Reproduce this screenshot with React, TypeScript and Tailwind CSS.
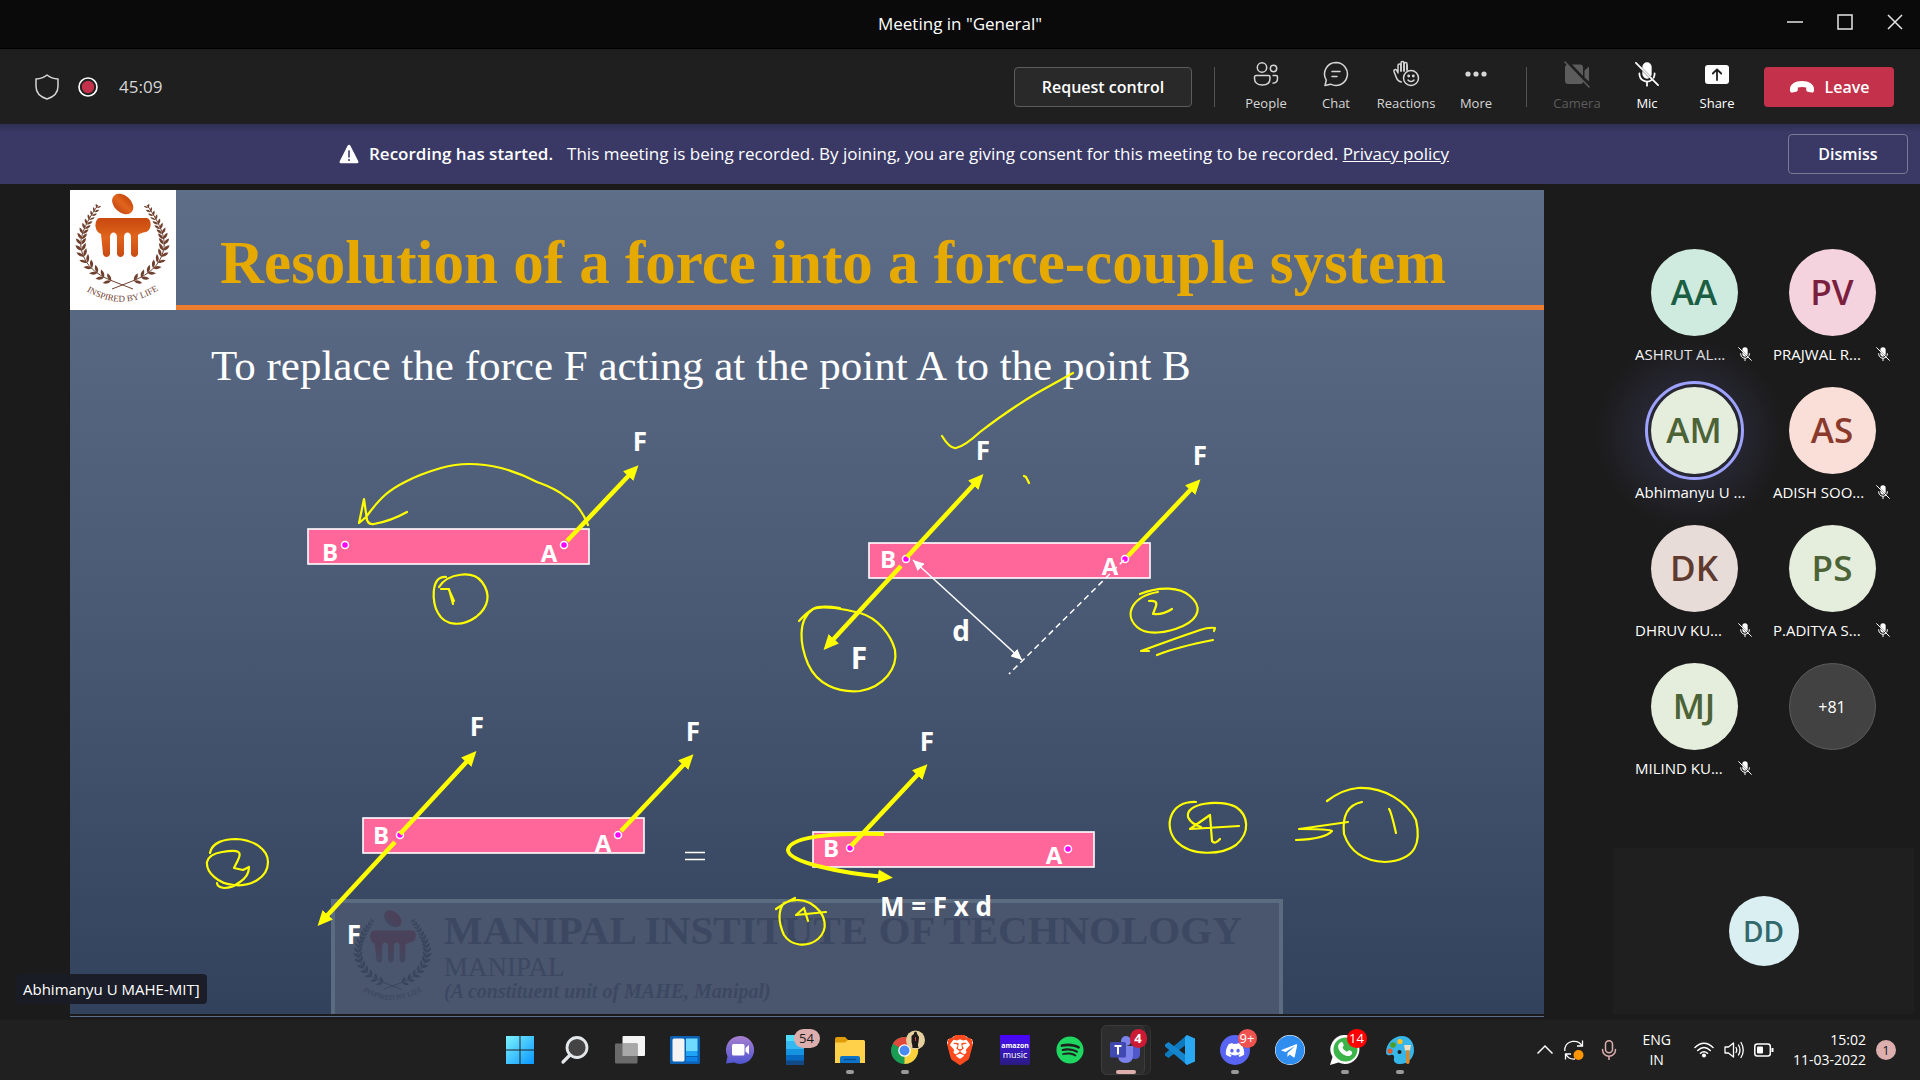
import React from "react";
import { FaSpotify, FaTelegram, FaDiscord } from "react-icons/fa";
import { SiBrave } from "react-icons/si";

/* ---------- Small shared icons ---------- */

function MicOffIcon({ className }: { className: string }) {
  return (
    <svg viewBox="0 0 24 24" className={className} fill="none" stroke="currentColor" strokeWidth="1.5" strokeLinecap="round">
      <path d="M12 2a4 4 0 0 1 4 4v6a4 4 0 0 1-.6 2.1L8 6.700V6a4 4 0 0 1 4-4zM8 9.500l6 6A4 4 0 0 1 8 12z" fill="currentColor" stroke="none" />
      <path d="M5.500 11.500v.5a6.500 6.500 0 0 0 10.600 5M18.500 11.500v.5c0 1.200-.3 2.200-.8 3.200M12 18.500V22M2.500 2.500l19 19" />
    </svg>
  );
}

function PeopleIcon() {
  return (
    <svg viewBox="0 0 26 26" className="size-[26px]" fill="none" stroke="currentColor" strokeWidth="1.5">
      <circle cx="9" cy="6.500" r="4.700" />
      <circle cx="20.500" cy="7.500" r="3.200" />
      <path d="M3 14.500h12.500a1.500 1.500 0 0 1 1.500 1.500v1.500c0 4-3 6.500-7.700 6.500S1.500 21.500 1.500 17.500V16A1.500 1.500 0 0 1 3 14.500z" />
      <path d="M19.500 14.500h3.500a1.500 1.500 0 0 1 1.500 1.500v1.500c0 3-2 4.700-5 4.700" />
    </svg>
  );
}

function ChatIcon() {
  return (
    <svg viewBox="0 0 26 26" className="size-[26px]" fill="none" stroke="currentColor" strokeWidth="1.500" strokeLinecap="round" strokeLinejoin="round">
      <path d="M13 1.500a11.500 11.500 0 1 1-5.400 21.700L2 24.500l1.300-5.400A11.500 11.500 0 0 1 13 1.500z" />
      <path d="M9 10.500h8M9 15.500h5" />
    </svg>
  );
}

function ReactionsIcon() {
  return (
    <svg viewBox="0 0 28 28" className="size-[28px]" fill="none" stroke="currentColor" strokeWidth="1.500" strokeLinecap="round" strokeLinejoin="round">
      <path d="M6 13V5.500a1.500 1.500 0 0 1 3 0V11V3a1.500 1.500 0 0 1 3 0v8V4a1.500 1.500 0 0 1 3 0v6M6 12.500L4.500 10a1.500 1.500 0 0 0-2.500 1.500l2.500 6.500c1 2.500 2.500 3.700 4.800 4" />
      <path d="M9 4v7M12 3v8M15 5v5" />
      <circle cx="19" cy="18" r="7.500" />
      <path d="M16 20c1.500 2 4.500 2 6 0" />
      <circle cx="16.700" cy="16" r=".7" fill="currentColor" />
      <circle cx="21.300" cy="16" r=".7" fill="currentColor" />
    </svg>
  );
}

function MoreIcon() {
  return (
    <svg viewBox="0 0 26 26" className="size-[26px]" fill="currentColor">
      <circle cx="5" cy="13" r="2.600" />
      <circle cx="13" cy="13" r="2.600" />
      <circle cx="21" cy="13" r="2.600" />
    </svg>
  );
}

function CameraOffIcon() {
  return (
    <svg viewBox="0 0 28 28" className="size-[28px]" fill="currentColor">
      <path d="M5 4.500L20 21v.5a2.500 2.500 0 0 1-2.500 2.500H5a3 3 0 0 1-3-3V8a3 3 0 0 1 3-3.500zM9 4.500h8A3 3 0 0 1 20 7.500V16zM21.500 10.500L26 6.500v15l-4.500-4z" />
      <path d="M2 2l24 25" stroke="currentColor" strokeWidth="1.500" strokeLinecap="round" />
    </svg>
  );
}

function ShareIcon() {
  return (
    <svg viewBox="0 0 26 26" className="size-[26px]">
      <rect x="1" y="4" width="24" height="19" rx="3" fill="currentColor" />
      <path d="M13 19V8.500M8.800 12.500L13 8.300l4.200 4.200" fill="none" stroke="#1f1f1f" strokeWidth="1.800" strokeLinecap="round" strokeLinejoin="round" />
    </svg>
  );
}

function HangUpIcon() {
  return (
    <svg viewBox="0 0 26 14" className="h-[14px] w-[26px]" fill="currentColor">
      <path d="M13 1C20 1 25 4.500 25 9v1.500c0 1.500-1 2.300-2.400 2l-3.800-.8c-1-.2-1.600-1-1.600-2V7.600c-2.700-.9-5.700-.9-8.400 0v2.100c0 1-.6 1.800-1.600 2l-3.800.8c-1.400.3-2.400-.5-2.400-2V9C1 4.500 6 1 13 1z" />
    </svg>
  );
}

/* ---------- Title bar, toolbar, banner ---------- */

function TitleBar() {
  return (
    <header className="relative flex h-[49px] items-center justify-center border-b border-black bg-[#0a0a0a] text-white">
      <h1 className="text-[17px] leading-6">Meeting in "General"</h1>
      <div className="absolute inset-y-0 right-0 flex">
        <button aria-label="Minimize" className="flex w-[50px] items-center justify-center pb-1">
          <svg viewBox="0 0 16 16" className="size-4" stroke="#e6e6e6" strokeWidth="1.500"><path d="M0 8h16" /></svg>
        </button>
        <button aria-label="Maximize" className="flex w-[50px] items-center justify-center pb-1">
          <svg viewBox="0 0 16 16" className="size-4" stroke="#e6e6e6" strokeWidth="1.500" fill="none"><path d="M1 1h14v14H1z" /></svg>
        </button>
        <button aria-label="Close" className="flex w-[50px] items-center justify-center pb-1">
          <svg viewBox="0 0 16 16" className="size-4" stroke="#e6e6e6" strokeWidth="1.500"><path d="M1 1l14 14M15 1L1 15" /></svg>
        </button>
      </div>
    </header>
  );
}

function ToolButton({ label, tone, children }: { label: string; tone: string; children: React.ReactNode }) {
  return (
    <button className={"flex w-[70px] flex-col items-center gap-[5px] " + tone}>
      <span className="flex h-7 items-center">{children}</span>
      <span className="text-[13px] leading-5">{label}</span>
    </button>
  );
}

function Toolbar() {
  return (
    <div className="flex h-[75px] items-center bg-[#1f1f1f] pr-[26px] pl-[34px] text-[#d6d6d6]">
      <svg viewBox="0 0 26 26" className="size-[26px]" fill="none" stroke="currentColor" strokeWidth="1.500" strokeLinejoin="round">
        <path d="M13 1c3.200 2.500 6.800 3.700 11 4v7.500c0 6-4 10.300-11 12.500C6 22.800 2 18.500 2 12.500V5c4.200-.3 7.800-1.500 11-4z" />
      </svg>
      <svg viewBox="0 0 20 20" className="ml-[18px] size-5" role="img" aria-label="Recording">
        <circle cx="10" cy="10" r="9" fill="none" stroke="#fff" strokeWidth="1.600" />
        <circle cx="10" cy="10" r="6.200" fill="#c4314b" />
      </svg>
      <time className="ml-[21px] text-[17px] leading-6">45:09</time>
      <div className="ml-auto flex items-center">
        <button className="h-10 w-[178px] rounded-[4px] border border-[#5c5c5c] bg-[#292929] text-[16px] font-semibold text-white">Request control</button>
        <span className="mr-4 ml-[22px] h-10 w-px bg-[#525252]" />
        <ToolButton label="People" tone="text-[#d6d6d6]"><PeopleIcon /></ToolButton>
        <ToolButton label="Chat" tone="text-[#d6d6d6]"><ChatIcon /></ToolButton>
        <ToolButton label="Reactions" tone="text-[#d6d6d6]"><ReactionsIcon /></ToolButton>
        <ToolButton label="More" tone="text-[#d6d6d6]"><MoreIcon /></ToolButton>
        <span className="mx-[15px] h-10 w-px bg-[#525252]" />
        <ToolButton label="Camera" tone="text-[#5c5c5c]"><CameraOffIcon /></ToolButton>
        <ToolButton label="Mic" tone="text-white"><MicOffIcon className="size-7" /></ToolButton>
        <ToolButton label="Share" tone="text-white"><ShareIcon /></ToolButton>
        <button className="ml-3 flex h-10 w-[130px] items-center justify-center gap-[10px] rounded-[4px] bg-[#c4314b] text-[16px] font-semibold text-white">
          <HangUpIcon />
          Leave
        </button>
      </div>
    </div>
  );
}

function Banner() {
  return (
    <div className="relative flex h-[60px] items-center bg-[#3a3966] pr-3 text-white">
      <div className="absolute inset-x-0 top-0 h-2 bg-gradient-to-b from-black/20 to-transparent" />
      <div className="flex flex-1 items-center justify-center text-[17px] leading-6">
        <svg viewBox="0 0 20 20" className="mr-[10px] size-5">
          <path d="M10 .8c.6 0 1 .3 1.300.8l8 15.600c.5 1-.1 2-1.200 2H1.900c-1.100 0-1.700-1-1.200-2l8-15.600c.3-.5.700-.8 1.300-.8z" fill="#fff" />
          <path d="M10 7v6" stroke="#3a3966" strokeWidth="1.600" strokeLinecap="round" />
          <circle cx="10" cy="16" r="1" fill="#3a3966" />
        </svg>
        <strong className="mr-[14px] font-semibold">Recording has started.</strong>
        <p>
          This meeting is being recorded. By joining, you are giving consent for this meeting to be recorded.{" "}
          <a href="#privacy" className="underline">Privacy policy</a>
        </p>
      </div>
      <button className="h-10 w-[120px] rounded-[4px] border border-[#7a7998] text-[16px] font-semibold">Dismiss</button>
    </div>
  );
}

/* ---------- Shared slide ---------- */

// Leaf pairs along the laurel stem: x, y, stem direction in degrees, scale
const leaves: [number, number, number, number][] = [
  [27, 18, -60, 0.55], [24.500, 22, -60, 0.6], [22, 26, -61, 0.65], [19.500, 30, -63, 0.7], [17, 34.500, -66, 0.75],
  [15, 39, -70, 0.8], [13, 44, -76, 0.85], [11.800, 49, -83, 0.9], [11.300, 54.500, -90, 0.95], [12, 60.500, -99, 1],
  [14, 66.500, -110, 1], [17.500, 72.500, -122, 1], [22, 78, -132, 1], [27.500, 83, -140, 1], [34, 87.500, -146, 1], [41, 91, -152, 1],
];

function Branch() {
  return (
    <g>
      <path d="M28 15C14 35 8 50 12 62c4 14 14 22 28 28l23 9" fill="none" stroke="currentColor" strokeWidth="1" />
      {leaves.map(([x, y, angle, scale], i) => (
        <g key={i} transform={`translate(${x} ${y}) rotate(${angle}) scale(${scale})`}>
          <path d="M0 0q4-3.200 8.500 0q-4.500 3-8.500 0z" transform="rotate(-42)" fill="currentColor" />
          <path d="M0 0q4-3.200 8.500 0q-4.500 3-8.500 0z" transform="rotate(36)" fill="currentColor" />
        </g>
      ))}
    </g>
  );
}

function Emblem({ muted }: { muted: boolean }) {
  const id = muted ? "motto-muted" : "motto";
  return (
    <svg viewBox="0 0 106 120" className={muted ? "h-[100px] w-[88px] text-[#37445c]" : "h-[120px] w-[106px] bg-white text-[#70402f]"}>
      <defs>
        <linearGradient id={id + "-g"} x1="0" y1="0" x2="0" y2="1">
          <stop offset="0" stopColor={muted ? "#4a425a" : "#c8480f"} />
          <stop offset=".5" stopColor={muted ? "#4a425a" : "#e0641c"} />
          <stop offset="1" stopColor={muted ? "#414862" : "#c84a14"} />
        </linearGradient>
        <path id={id} d="M13 99Q52 125 92 98" />
      </defs>
      <ellipse cx="52.700" cy="14" rx="12" ry="8.500" transform="rotate(42 52.700 14)" fill={`url(#${id}-g)`} />
      <path d="M29 28h48c5 1 5 12-1 14q-6 1-8 3v19c-1 4-6 4-7 0V47c0-6-7-6-7 0v17c-1 4-6 4-7 0V47c0-6-7-6-7 0v17c-1 4-6 4-7 0L31 44c-7-2-7-14-2-16z" fill={`url(#${id}-g)`} />
      <Branch />
      <g transform="translate(105 0) scale(-1 1)"><Branch /></g>
      <text fill="currentColor" fontSize="9" fontFamily="Liberation Serif, serif">
        <textPath href={"#" + id} startOffset="50%" textAnchor="middle">INSPIRED BY LIFE</textPath>
      </text>
    </svg>
  );
}

function Beam({ x, y }: { x: number; y: number }) {
  return <rect x={x} y={y} width="281" height="35" fill="#ff6699" stroke="#fff" strokeWidth="1.600" />;
}

function Pin({ x, y }: { x: number; y: number }) {
  return <circle cx={x} cy={y} r="3.500" fill="#ff00ff" stroke="#fff" strokeWidth="1.500" />;
}

function Force({ x1, y1, x2, y2 }: { x1: number; y1: number; x2: number; y2: number }) {
  return <path d={`M${x1} ${y1}L${x2} ${y2}`} stroke="#ffff00" strokeWidth="4.500" fill="none" markerEnd="url(#head)" />;
}

function Label({ x, y, size = 26, children }: { x: number; y: number; size?: number; children: string }) {
  return (
    <text x={x} y={y} fontSize={size} textAnchor="middle" fontWeight="700" fill="#fff" fontFamily="Open Sans, sans-serif">
      {children}
    </text>
  );
}

function Diagram() {
  return (
    <svg viewBox="70 190 1474 824" className="absolute inset-0 h-full w-full">
      <defs>
        <marker id="head" markerUnits="userSpaceOnUse" markerWidth="16" markerHeight="14" refX="7" refY="7" orient="auto">
          <path d="M0 0l15 7-15 7z" fill="#ffff00" />
        </marker>
        <marker id="tip" markerUnits="userSpaceOnUse" markerWidth="12" markerHeight="10" refX="11" refY="5" orient="auto-start-reverse">
          <path d="M0 0l11 5-11 5z" fill="#fff" />
        </marker>
      </defs>

      <Beam x={308} y={529} />
      <Pin x={345} y={545} />
      <Pin x={564} y={545} />
      <Force x1={567} y1={541} x2={633} y2={471} />
      <Label x={330} y={561} size={24}>B</Label>
      <Label x={549} y={562} size={24}>A</Label>
      <Label x={640} y={451}>F</Label>

      <Beam x={869} y={543} />
      <Pin x={906} y={559} />
      <Pin x={1125} y={559} />
      <Force x1={907} y1={557} x2={978} y2={480} />
      <Force x1={901} y1={566} x2={829} y2={644} />
      <Force x1={1128} y1={556} x2={1195} y2={485} />
      <path d="M913 560L1022 660" stroke="#fff" strokeWidth="1.500" markerStart="url(#tip)" markerEnd="url(#tip)" />
      <path d="M1124 560L1009 674" stroke="#fff" strokeWidth="1.500" strokeDasharray="6 4" />
      <Label x={888} y={568} size={24}>B</Label>
      <Label x={1110} y={575} size={24}>A</Label>
      <Label x={983} y={460}>F</Label>
      <Label x={1200} y={465}>F</Label>
      <Label x={859} y={669} size={30}>F</Label>
      <Label x={961} y={641} size={28}>d</Label>

      <Beam x={363} y={818} />
      <Pin x={400} y={835} />
      <Pin x={618} y={835} />
      <Force x1={400} y1={834} x2={471} y2={757} />
      <Force x1={395} y1={842} x2={323} y2={920} />
      <Force x1={621} y1={831} x2={688} y2={760} />
      <path d="M685 852.500h20M685 859.500h20" stroke="#fff" strokeWidth="1.500" />
      <Label x={381} y={844} size={24}>B</Label>
      <Label x={603} y={852} size={24}>A</Label>
      <Label x={477} y={736}>F</Label>
      <Label x={693} y={741}>F</Label>
      <Label x={354} y={944}>F</Label>

      <Beam x={813} y={832} />
      <Pin x={850} y={848} />
      <Pin x={1068} y={849} />
      <Force x1={851} y1={846} x2={922} y2={770} />
      <path d="M884 834C850 833 790 834 788 850C788 862 840 873 885 877" stroke="#ffff00" strokeWidth="4" fill="none" markerEnd="url(#head)" />
      <Label x={831} y={857} size={24}>B</Label>
      <Label x={1054} y={864} size={24}>A</Label>
      <Label x={927} y={751}>F</Label>
      <Label x={936} y={916}>M = F x d</Label>

      <g fill="none" stroke="#ffff00" strokeWidth="2.200" strokeLinecap="round" strokeLinejoin="round">
        <path d="M588 525C582 510 575 502 566 497C555 488 545 485 537 482Q520 473 501 468Q485 464 469 464Q455 464 441 468Q420 474 405 482Q393 488 385 495C376 503 370 512 366 517L359 523L364 499L367 520Q369 525 374 524Q391 521 407 512" />
        <path d="M446 577C430 576 432 604 438 613C445 626 462 627 476 617C489 607 491 594 482 582C473 570 448 573 439 587M441 589h8l4 15M449 590l5 11" />
        <path d="M942 436Q950 449 956 448Q965 446 980 432Q1010 409 1037 393L1073 373M1024 476l2 1 3 6" />
        <path d="M799 621Q806 613 813 609Q820 605 840 608M860 613C878 618 891 635 895 650C898 668 884 687 860 691C837 693 817 684 808 664C800 645 797 620 813 609C822 605 845 609 860 613" />
        <path d="M1140 594C1160 586 1180 587 1190 596C1202 606 1200 618 1183 626C1167 633 1147 636 1137 627C1123 614 1133 596 1158 592M1149 601Q1158 600 1156 606L1153 614Q1163 615 1172 609" />
        <path d="M1149 651h-8Q1185 635 1200 630Q1209 627 1215 628l-1 3M1157 655Q1177 647 1213 640" />
        <path d="M210 853C212 842 225 839 236 839C255 840 268 850 268 862C268 878 250 887 234 885C218 884 206 872 207 862Q209 854 222 852C240 849 242 852 238 860L234 868l9 2 6-3Q249 876 240 882Q232 888 224 888Q217 887 217 883" />
        <path d="M776 909Q784 903 795 898M784 903Q798 897 810 903C828 914 828 930 818 939C807 948 791 946 784 935C778 922 778 910 784 903M804 908l-8 7 30-3M804 908l4 13" />
        <path d="M1196 802C1170 801 1163 826 1176 841C1191 857 1222 855 1236 845C1251 832 1248 815 1236 807C1220 799 1185 803 1188 817Q1191 824 1201 827M1210 815L1190 829L1239 826M1210 815l2 26q3 4 8-2" />
        <path d="M1348 822L1299 829Q1330 829 1332 831Q1325 839 1296 840" />
        <path d="M1327 801Q1343 789 1358 788C1385 787 1407 802 1416 820C1421 842 1417 860 1385 862C1364 861 1350 852 1344 834Q1341 806 1362 802M1389 809q2 2 7 24" />
      </g>
    </svg>
  );
}

function Slide() {
  return (
    <section aria-label="Shared slide" className="relative flex min-h-[824px] flex-col bg-gradient-to-b from-[#5e6e88] via-[#4b5a74] to-[#33425c]">
      <div className="flex">
        <Emblem muted={false} />
        <h2 className="flex-1 border-b-[5px] border-[#ed7d31] pt-[38px] pl-11 font-['Liberation_Serif',serif] text-[61px] leading-[70px] font-bold whitespace-nowrap text-[#e5a900]">
          Resolution of a force into a force-couple system
        </h2>
      </div>
      <p className="mt-8 pl-[141px] font-['Liberation_Serif',serif] text-[43px] leading-[48px] whitespace-nowrap text-white">
        To replace the force F acting at the point A to the point B
      </p>
      <div className="mt-auto ml-[261px] flex h-[115px] w-[952px] border-x-4 border-t-4 border-[#5b6b80] bg-[#4a566d] pt-1 pl-[14px] font-['Liberation_Serif',serif] text-[#3c4862]">
        <Emblem muted />
        <div className="pl-[7px]">
          <p className="text-[41px] leading-[46px] font-bold whitespace-nowrap">MANIPAL INSTITUTE OF TECHNOLOGY</p>
          <p className="text-[27px] leading-7">MANIPAL</p>
          <p className="text-[20px] leading-5 font-bold italic">(A constituent unit of MAHE, Manipal)</p>
        </div>
      </div>
      <Diagram />
    </section>
  );
}

/* ---------- Participants ---------- */

type Person = { initials: string; name: string; color: string; speaking?: boolean };

const people: Person[] = [
  { initials: "AA", name: "ASHRUT AL...", color: "bg-[#cfeadf] text-[#1b5e43]" },
  { initials: "PV", name: "PRAJWAL R...", color: "bg-[#f4d3de] text-[#7a1f3d]" },
  { initials: "AM", name: "Abhimanyu U ...", color: "bg-[#e5eddc] text-[#4b6336]", speaking: true },
  { initials: "AS", name: "ADISH SOO...", color: "bg-[#fadfd8] text-[#8a3a2c]" },
  { initials: "DK", name: "DHRUV KU...", color: "bg-[#e7dcd8] text-[#5f3a2e]" },
  { initials: "PS", name: "P.ADITYA S...", color: "bg-[#e5eddc] text-[#4b6336]" },
  { initials: "MJ", name: "MILIND KU...", color: "bg-[#e5eddc] text-[#4b6336]" },
];

function Participant({ person }: { person: Person }) {
  return (
    <li className="relative flex w-[118px] flex-col items-center">
      {person.speaking && <span className="absolute -top-12 -left-10 size-[190px] rounded-full bg-[radial-gradient(closest-side,#32324a,transparent)]" />}
      <span className={"relative flex size-[87px] items-center justify-center rounded-full text-[35px] font-semibold " + person.color}>
        {person.initials}
        {person.speaking && <span className="absolute -inset-[6px] rounded-full border-[3px] border-[#9ea2ff]" />}
      </span>
      <span className="relative mt-2 flex w-full items-center justify-between text-[15px] leading-5 whitespace-nowrap text-white">
        {person.name}
        {!person.speaking && <MicOffIcon className="size-4" />}
      </span>
    </li>
  );
}

function Sidebar() {
  return (
    <aside className="flex w-[376px] shrink-0 flex-col pr-[6px] pl-[69px]">
      <ul className="mt-[59px] grid grid-cols-[118px_118px] gap-x-5 gap-y-[23px] pl-[22px]">
        {people.map((person) => (
          <Participant key={person.initials} person={person} />
        ))}
        <li className="flex w-[118px] justify-center">
          <button className="size-[87px] rounded-full border border-[#5c5c5c] bg-[#424242] text-[16px] text-white">+81</button>
        </li>
      </ul>
      <div className="mt-auto flex h-[166px] items-center justify-center bg-[#1f1f1f]">
        <span className="flex size-[70px] items-center justify-center rounded-full bg-[#daeff2] text-[28px] font-semibold text-[#31686c]">DD</span>
      </div>
    </aside>
  );
}

/* ---------- Taskbar ---------- */

function StartIcon() {
  return (
    <svg viewBox="0 0 30 30" className="size-[30px]">
      <defs>
        <linearGradient id="win" x1="0" y1="0" x2="1" y2="1">
          <stop offset="0" stopColor="#7cf3ff" />
          <stop offset="1" stopColor="#0a96ff" />
        </linearGradient>
      </defs>
      <path d="M1 1h13.500v13.500H1zM15.500 1H29v13.500H15.500zM1 15.500h13.500V29H1zM15.500 15.500H29V29H15.500z" fill="url(#win)" />
    </svg>
  );
}

function SearchIcon() {
  return (
    <svg viewBox="0 0 30 30" className="size-[30px]" fill="none" stroke="#e4e8ea" strokeLinecap="round">
      <circle cx="17" cy="12.500" r="10" fill="#444" strokeWidth="2.800" />
      <path d="M9.500 20.500L3 27" strokeWidth="3.200" />
    </svg>
  );
}

function TaskViewIcon() {
  return (
    <svg viewBox="0 0 30 30" className="size-[30px]">
      <rect x="7.500" y="1" width="22.500" height="20" rx="1" fill="#f4f4f4" />
      <rect x="0" y="8.500" width="22.500" height="20" rx="1" fill="#6a6a6a" />
      <path d="M7.500 8.500h15V21h-15z" fill="#a8a8a8" />
    </svg>
  );
}

function WidgetsIcon() {
  return (
    <svg viewBox="0 0 30 30" className="size-[30px]">
      <rect y="1" width="30" height="28" rx="1.500" fill="#0b62b4" />
      <rect x="2.500" y="3.500" width="12" height="23" rx="1.500" fill="#f3f3f3" />
      <path d="M16 3.500h11.500v12.500H16z" fill="#6fdcff" />
      <path d="M16 16h11.500v5H16z" fill="#1fa3f5" />
      <path d="M16 22h11.500v4.500H16z" fill="#0f82e8" />
    </svg>
  );
}

function ChatAppIcon() {
  return (
    <svg viewBox="0 0 30 30" className="size-[30px]">
      <defs>
        <linearGradient id="chatapp" x1="0" y1="0" x2="0" y2="1">
          <stop offset="0" stopColor="#a77fd0" />
          <stop offset="1" stopColor="#4f55d0" />
        </linearGradient>
      </defs>
      <path d="M15 1a14 14 0 1 1-6 26.600L1 28.500l1.500-7A14 14 0 0 1 15 1z" fill="url(#chatapp)" />
      <rect x="7" y="9" width="12.500" height="11.500" rx="1.500" fill="#fff" />
      <path d="M20.500 13l3.500-3v9.500l-3.500-3z" fill="#fff" />
    </svg>
  );
}

function PhoneAppIcon() {
  return (
    <svg viewBox="0 0 30 30" className="size-[30px]">
      <path d="M6 0h18v7H6z" fill="#50dcf8" />
      <path d="M6 6h18v8.500H6z" fill="#35b8f0" />
      <path d="M6 14h18v7H6z" fill="#1592e0" />
      <path d="M6 20h18v6H6z" fill="#0869c0" />
      <path d="M6 25.500h18V30H6z" fill="#134a86" />
    </svg>
  );
}

function ExplorerIcon() {
  return (
    <svg viewBox="0 0 30 30" className="size-[30px]">
      <path d="M0 4q0-2 2-2h8l3 3v5H0z" fill="#e09b08" />
      <path d="M0 7.500L10 7.500 13 5h15.500q1.500 0 1.500 1.500V28H0z" fill="#ffd04a" />
      <path d="M5 28v-5q0-2 2-2h16q2 0 2 2v5z" fill="#0d73c8" />
      <path d="M9 24.500h12" stroke="#0a4a87" strokeWidth="1.200" />
    </svg>
  );
}

function ChromeIcon() {
  return (
    <svg viewBox="0 0 30 30" className="size-[30px] overflow-visible">
      <circle cx="14.500" cy="15.500" r="13.500" fill="#1a9c55" />
      <path d="M14.500 15.500L2.800 8.700A13.500 13.500 0 0 1 26.200 8.700z" fill="#e04a3c" />
      <path d="M14.500 15.500L26.200 8.700A13.500 13.500 0 0 1 14.500 29z" fill="#fdd13c" />
      <circle cx="14.500" cy="15.500" r="6.300" fill="#fff" />
      <circle cx="14.500" cy="15.500" r="5" fill="#4a8af4" />
      <circle cx="25.500" cy="5" r="9.500" fill="#e6cf9e" />
      <path d="M25.500-3.500q-1.600 0-1.600 2.500l-2.400 2v6q1 3 1 6h6q-1-4 0-6l.5-5-1.900-3q0-2.500-1.600-2.500z" fill="#1d1a19" />
      <path d="M25.500 2v4" stroke="#c44" strokeWidth="1" />
    </svg>
  );
}

function BraveIcon() {
  return (
    <span className="relative flex size-[30px] items-center justify-center">
      <svg viewBox="0 0 30 30" className="absolute inset-0">
        <path d="M9 1h12l3 3 3 0 1 4-1 3-3 11q-1 2-3 3.500L15 29.500l-6-4q-2-1.500-3-3.500L3 11 2 8l1-4h3z" fill="#fff" />
      </svg>
      <SiBrave className="relative size-[30px] text-[#fb4a1d]" />
    </span>
  );
}

function AmazonIcon() {
  return (
    <span className="flex size-[30px] flex-col items-center justify-center bg-gradient-to-b from-[#4a00ff] to-[#2a1a80] text-white">
      <span className="text-[7px] leading-[9px] font-bold">amazon</span>
      <span className="text-[9px] leading-[10px]">music</span>
    </span>
  );
}

function TeamsIcon() {
  return (
    <svg viewBox="0 0 30 30" className="size-[30px]">
      <circle cx="16" cy="6" r="5" fill="#7b83eb" />
      <circle cx="25" cy="7" r="3.500" fill="#5059c9" />
      <path d="M20 11h8.500q1.500 0 1.500 1.500V19q0 5-5 5t-5-5z" fill="#5059c9" />
      <path d="M8 11h15v9q0 8-7.500 8T8 20z" fill="#7b83eb" />
      <rect x="0" y="7" width="16" height="15.500" rx="1.500" fill="#4049b0" />
      <path d="M4.500 11h7M8 11v8.500" stroke="#fff" strokeWidth="2" />
    </svg>
  );
}

function CodeIcon() {
  return (
    <svg viewBox="0 0 30 30" className="size-[30px]">
      <path d="M22 0v9L3.500 23 0 20.500v-2z" fill="#0f79bd" />
      <path d="M22 30v-9L3.500 7 0 9.500v2z" fill="#1484cc" />
      <path d="M22 0l8 3.500v23L22 30l-2-2V2z" fill="#2aa8f2" />
    </svg>
  );
}

function PaintIcon() {
  return (
    <svg viewBox="0 0 30 30" className="size-[30px]">
      <path d="M17 1C8 1 1 9 1 17.500 1 19.500 3 21 5.500 20c3-1 4 1 3.500 3-1 4 2 6 6 6 8 0 14-6 14-14S24 1 17 1z" fill="#37b6ea" />
      <circle cx="8" cy="10" r="2.800" fill="#4f9e1e" />
      <circle cx="15" cy="6.500" r="2.600" fill="#fcc21b" />
      <circle cx="5" cy="16" r="2.600" fill="#e0592a" />
      <circle cx="14.500" cy="17" r="2" fill="#1f1f1f" />
      <path d="M19 10h7l-1 5.500h-5z" fill="#f0dcc0" />
      <path d="M21 15.500h3.500V28q-1.700 2-3.500 0z" fill="#d9872b" />
    </svg>
  );
}

function WhatsappApp() {
  return (
    <svg viewBox="0 0 30 30" className="size-[30px]">
      <path d="M15.500 0a14.500 14.500 0 1 1-7 27.500L0 30l2.500-8A14.500 14.500 0 0 1 15.500 0z" fill="#fff" />
      <circle cx="15.500" cy="14.500" r="12" fill="#3bb54a" />
      <path d="M10.500 7.500c1.500-1 2.500 0 3 2 .5 1.500-.5 2-1 3 1 2 2.500 3.500 4.500 4.300 1-.6 1.500-2 3-1.300 2 1 2.500 1.500 2 3-1 2.500-3.500 3-6 2.200-4-1.400-6.500-4-7.700-7.500-.6-2.500.4-4.500 2.200-5.700z" fill="#fff" />
    </svg>
  );
}

function DiscordApp() {
  return (
    <span className="flex size-[30px] items-center justify-center rounded-full bg-[#5865f2] text-white">
      <FaDiscord className="size-5" />
    </span>
  );
}

type App = { name: string; icon: React.ReactNode; open?: boolean; active?: boolean; badge?: string; badgeClass?: string };

const apps: App[] = [
  { name: "Start", icon: <StartIcon /> },
  { name: "Search", icon: <SearchIcon /> },
  { name: "Task view", icon: <TaskViewIcon /> },
  { name: "Widgets", icon: <WidgetsIcon /> },
  { name: "Chat", icon: <ChatAppIcon /> },
  { name: "Phone", icon: <PhoneAppIcon />, badge: "54", badgeClass: "left-[26px] w-[26px] bg-[#dcaead] text-[#1a1a1a]" },
  { name: "File Explorer", icon: <ExplorerIcon />, open: true },
  { name: "Chrome", icon: <ChromeIcon />, open: true },
  { name: "Brave", icon: <BraveIcon /> },
  { name: "Amazon Music", icon: <AmazonIcon /> },
  { name: "Spotify", icon: <FaSpotify className="size-7 text-[#1ed760]" /> },
  { name: "Teams", icon: <TeamsIcon />, active: true, badge: "4", badgeClass: "left-[32px] w-[17px] bg-[#cc1a36] font-bold text-white" },
  { name: "Visual Studio Code", icon: <CodeIcon /> },
  { name: "Discord", icon: <DiscordApp />, open: true, badge: "9+", badgeClass: "left-[30px] w-[19px] bg-[#ef5350] text-white" },
  { name: "Telegram", icon: <FaTelegram className="size-[30px] rounded-full bg-white text-[#2f8df0]" /> },
  { name: "WhatsApp", icon: <WhatsappApp />, open: true, badge: "14", badgeClass: "left-[29px] w-5 bg-[#ff0000] text-white" },
  { name: "Paint", icon: <PaintIcon />, open: true },
];

function TaskButton({ app }: { app: App }) {
  return (
    <button aria-label={app.name} className="relative flex h-[60px] w-[55px] items-center justify-center">
      {app.active && <span className="absolute inset-y-[5px] right-[2px] left-[3px] rounded-md border border-[#333] bg-[#272727]" />}
      {app.active && <span className="absolute inset-y-[5px] right-[8px] left-[3px] rounded-md border border-[#3c3c3c] bg-[#2d2d2d]" />}
      <span className="relative">{app.icon}</span>
      {app.badge && (
        <span className={"absolute top-[9px] flex h-[19px] items-center justify-center rounded-full text-[13px] leading-none " + app.badgeClass}>{app.badge}</span>
      )}
      {app.open && <span className="absolute bottom-[6px] h-1 w-2 rounded-full bg-[#9a9a9a]" />}
      {app.active && <span className="absolute bottom-[6px] left-[18px] h-1 w-5 rounded-full bg-[#dcaead]" />}
    </button>
  );
}

function Tray() {
  return (
    <div className="flex items-center justify-end pr-6 text-[14px] leading-5 text-white">
      <svg viewBox="0 0 16 16" className="mr-[11px] size-4" fill="none" stroke="#fff" strokeWidth="1.500"><path d="M.5 11.500L8 4l7.500 7.500" /></svg>
      <svg viewBox="0 0 20 20" className="mr-[15px] size-5" fill="none" stroke="#fff" strokeWidth="1.300">
        <path d="M.8 11V8.500C2.500.5 14-1.500 18 6M18.500.5V6H13M1.500 19.500V14H7M2 14.500C4 18 7 19.500 11 19" />
        <circle cx="14.500" cy="15" r="5" fill="#ff9500" stroke="none" />
      </svg>
      <svg viewBox="0 0 20 20" className="size-5" fill="none" stroke="#dcaead" strokeWidth="1.500" strokeLinecap="round">
        <rect x="6.500" y=".8" width="7" height="12" rx="3.500" />
        <path d="M3.500 9.500c0 9 13 9 13 0M10 16.500v3" />
      </svg>
      <span className="mx-[23px] text-center">ENG<br />IN</span>
      <button aria-label="Network, volume and battery" className="flex gap-[10px]">
        <svg viewBox="0 0 20 20" className="size-5" fill="none" stroke="#fff" strokeWidth="1.500" strokeLinecap="round">
          <path d="M1 7.500q9-8.500 18 0M3.700 10.500q6.300-6 12.600 0M6.500 13.300q3.500-3.200 7 0" />
          <circle cx="10" cy="15.500" r="1.300" fill="#fff" />
        </svg>
        <svg viewBox="0 0 20 20" className="size-5" fill="none" stroke="#fff" strokeWidth="1.300" strokeLinecap="round" strokeLinejoin="round">
          <path d="M1 7h3.500L9.500 3v14l-5-4H1zM12 7.500q1.500 2.500 0 5M14.500 5q3 5 0 10M17 2.500q4.500 7.500 0 15" />
        </svg>
        <svg viewBox="0 0 20 20" className="size-5" fill="none" stroke="#fff" strokeWidth="1.500">
          <rect x=".8" y="4" width="15.500" height="12" rx="2.500" />
          <rect x="3" y="6.500" width="6" height="7" rx="1" fill="#fff" stroke="none" />
          <path d="M18.500 8v4" strokeWidth="2" />
        </svg>
      </button>
      <time className="ml-[19px] text-right">15:02<br />11-03-2022</time>
      <span className="ml-[10px] flex size-5 items-center justify-center rounded-full bg-[#dcaead] text-[13px] text-[#1a1a1a]">1</span>
    </div>
  );
}

function Taskbar() {
  return (
    <footer className="grid h-[60px] grid-cols-[1fr_auto_1fr] bg-[#202020]">
      <span />
      <nav aria-label="Taskbar" className="flex">
        {apps.map((app) => (
          <TaskButton key={app.name} app={app} />
        ))}
      </nav>
      <Tray />
    </footer>
  );
}

export default function App() {
  return (
    <div className="flex min-h-screen flex-col bg-[#1b1b1b] font-['Open_Sans',sans-serif]">
      <TitleBar />
      <Toolbar />
      <Banner />
      <main className="relative flex flex-1 pt-[6px] pb-[6px] pl-[70px]">
        <div className="min-w-0 flex-1">
          <Slide />
          <div className="-mb-1 mt-[2px] h-px bg-[#5b6f8c]" />
        </div>
        <Sidebar />
        <span className="absolute bottom-4 left-4 flex h-[30px] items-center rounded-[4px] bg-[#1a1c26]/95 px-[7px] text-[15px] text-white">Abhimanyu U MAHE-MIT]</span>
      </main>
      <Taskbar />
    </div>
  );
}
